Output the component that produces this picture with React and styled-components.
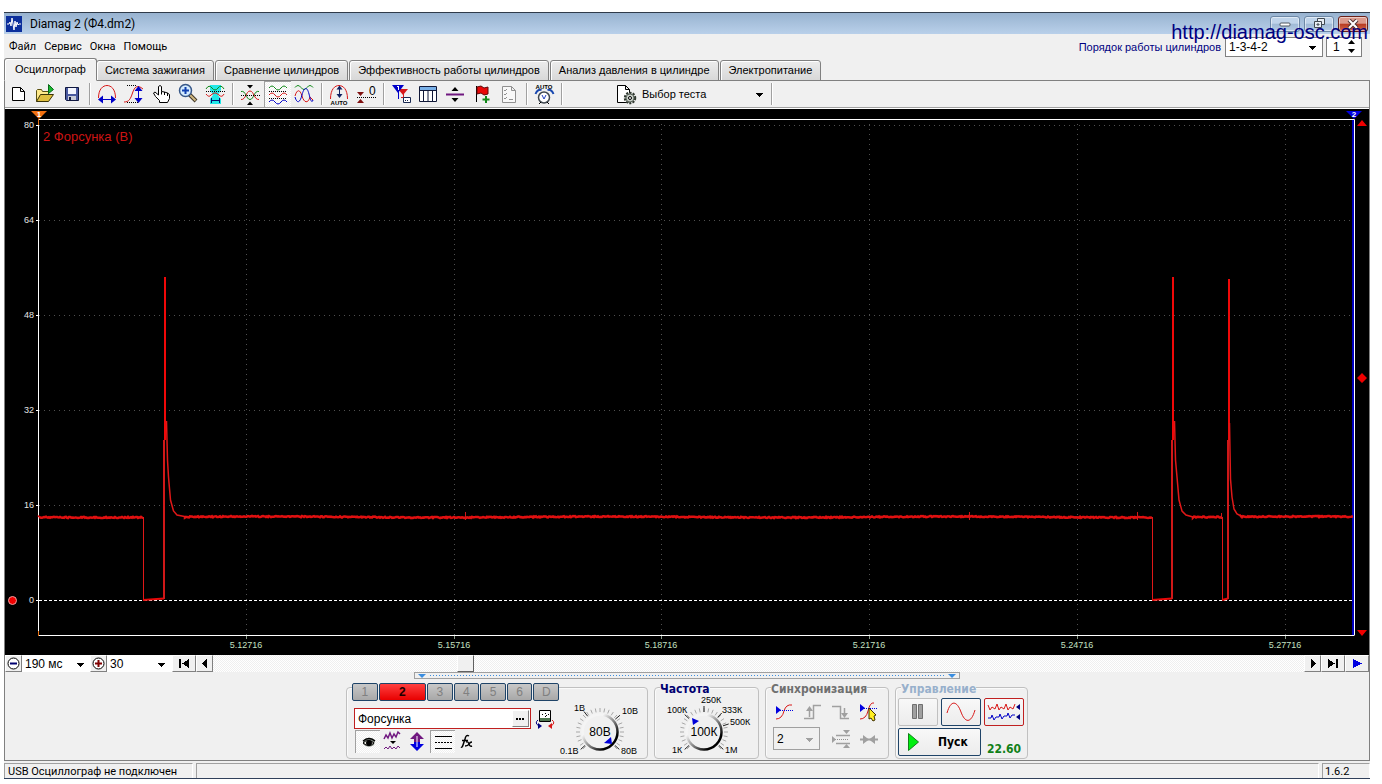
import React from "react";
import styled, { createGlobalStyle, css } from "styled-components";

const FACE = "#f0f0f0";
const LINE = "#808080";
const sans = '"Liberation Sans", Arial, sans-serif';
const system = 'Roboto, "Noto Sans", sans-serif';
const heading = '"DejaVu Sans Condensed", "Noto Sans", sans-serif';

const GlobalStyle = createGlobalStyle`
  * { box-sizing: border-box; }
  body { margin: 0; background: #fff; font-family: ${sans}; font-size: 11px; line-height: 14px; color: #000; }
  button, select, input { font: inherit; color: inherit; margin: 0; padding: 0; border: 0; border-radius: 0; outline: 0; background: none; }
  select { appearance: none; cursor: pointer; }
  svg { display: block; }
`;

/* ---------- window frame ---------- */

const Page = styled.div`
  padding: 12px 12px 0 4px;
`;

const Window = styled.div`
  position: relative;
  background: ${FACE};
  border-top: 1px solid #2f3b4a;
`;

const TitleBar = styled.header`
  display: flex;
  align-items: center;
  height: 21px;
  padding: 0 2px;
  background: linear-gradient(#98b3d0, #b9d0ea);
`;

const Title = styled.h1`
  flex: 1;
  margin: 0 0 0 8px;
  font: 12px/18px ${system};
`;

const Captions = styled.div`
  display: flex;
  gap: 4px;
`;

const CaptionButton = styled.button`
  display: flex;
  align-items: center;
  justify-content: center;
  width: 30px;
  height: 16px;
  border: 1px solid #6d88a6;
  border-radius: 3px;
  box-shadow: inset 0 0 0 1px #ffffff80;
  background: ${(p) => (p.$danger ? "linear-gradient(#dc9a8c 45%, #b83a20 50%, #d06a50)" : "linear-gradient(#c0d4ea 45%, #9fb9d5 50%, #b4cbe4)")};
  ${(p) => p.$danger && css`border-color: #6a2018;`}
`;

const Watermark = styled.a`
  position: absolute;
  top: 7px;
  right: 2px;
  font-size: 20px;
  line-height: 24px;
  color: #000080;
  text-decoration: none;
`;

const MenuBar = styled.nav`
  display: flex;
  align-items: center;
  height: 24px;
  padding: 1px 8px 0 5px;
`;

const MenuItem = styled.button`
  margin-right: 8px;
  font-family: ${system};
  font-size: 11px;
`;

const OrderLabel = styled.label`
  margin-left: auto;
  margin-right: 4px;
  color: #000080;
`;

/* ---------- drop-downs ---------- */

const SelectBox = styled.div`
  position: relative;
  width: ${(p) => p.$width}px;
  height: ${(p) => p.$height}px;
  border: ${(p) => (p.$border ? `1px solid ${p.$border}` : "0")};
  background: ${(p) => p.$fill || "#fff"};
  select { width: 100%; height: 100%; padding-left: 3px; font-size: ${(p) => p.$size || 11}px; line-height: 14px; }
  select:disabled { opacity: 1; color: #000; }
  svg { position: absolute; right: ${(p) => p.$arrow || 6}px; top: 50%; margin-top: -1px; pointer-events: none; }
`;

function DropDown({ id, label, value, color = "#000", ...box }) {
  return (
    <SelectBox {...box}>
      <select id={id} aria-label={label} disabled={box.$disabled} defaultValue={value}>
        <option>{value}</option>
      </select>
      <svg width="7" height="4" shapeRendering="crispEdges"><path d="M0 0h7L3.5 4z" fill={color} /></svg>
    </SelectBox>
  );
}

const Spinner = styled.div`
  display: flex;
  align-items: center;
  width: 36px;
  height: 20px;
  margin-left: 3px;
  border: 1px solid ${LINE};
  background: #fff;
  input { width: 18px; padding-left: 6px; font-size: 12px; }
`;

const SpinArrows = styled.div`
  display: flex;
  flex-direction: column;
  gap: 4px;
  button { width: 12px; height: 5px; display: flex; justify-content: center; align-items: center; }
`;

/* ---------- tabs ---------- */

const Tabs = styled.div`
  display: flex;
  align-items: flex-end;
  gap: 1px;
  height: 22px;
`;

const Tab = styled.button`
  height: ${(p) => (p.$active ? 23 : 21)}px;
  margin-bottom: -1px;
  padding: 0 8px 2px;
  border: 1px solid ${LINE};
  border-radius: 3px 3px 0 0;
  box-shadow: inset 1px 1px 0 #fff;
  background: linear-gradient(#ececec, #d8d8d8);
  white-space: nowrap;
  ${(p) => p.$active && css`
    position: relative;
    padding: 0 10px 2px;
    margin-right: -2px;
    border-bottom-color: ${FACE};
    background: ${FACE};
  `}
`;

const Workspace = styled.main`
  border: 1px solid ${LINE};
`;

/* ---------- toolbar ---------- */

const Toolbar = styled.div`
  display: flex;
  align-items: flex-start;
  height: 28px;
  border-bottom: 1px solid #fff;
  box-shadow: inset 0 -1px 0 #a0a0a0;
`;

const pressed = css`
  box-shadow: inset 1px 1px 0 #a0a0a0;
  background: repeating-conic-gradient(#fff 0 25%, ${FACE} 0 50%) 0 0 / 2px 2px;
`;

const ToolButton = styled.button`
  width: 27px;
  height: 26px;
  ${(p) => p.$pressed && pressed}
`;

const Separator = styled.span`
  width: 8px;
  height: 22px;
  margin-top: 2px;
  background: linear-gradient(90deg, transparent 3px, #a0a0a0 3px 4px, #fff 4px 5px, transparent 5px);
`;

const TestPicker = styled.div`
  display: flex;
  align-items: center;
  width: 156px;
  margin-left: 46px;
`;

/* ---------- chart and transport ---------- */

const Scope = styled.svg`
  width: 100%;
  height: auto;
  background: #000;
`;

const Transport = styled.div`
  display: flex;
  height: 17px;
`;

const RaisedButton = styled.button`
  display: flex;
  align-items: center;
  justify-content: center;
  width: ${(p) => p.$width}px;
  height: 17px;
  border: 1px solid;
  border-color: #fff #808080 #808080 #fff;
  background: ${FACE};
`;

const Track = styled.input`
  flex: 1;
  min-width: 0;
  height: 17px;
  appearance: none;
  background: repeating-conic-gradient(#fff 0 25%, #efefef 0 50%) 0 0 / 2px 2px;
  &::-webkit-slider-thumb {
    appearance: none;
    width: 17px;
    height: 17px;
    border: 1px solid;
    border-color: #fff #606060 #606060 #fff;
    background: ${FACE};
  }
`;

/* ---------- bottom panel ---------- */

const Splitter = styled.div`
  display: flex;
  align-items: center;
  justify-content: space-between;
  width: 40%;
  height: 7px;
  margin: 0 auto 8px;
  padding: 0 3px;
  border: 1px solid #a0a0a0;
  &::before, &::after { content: ""; border: 4px solid transparent; border-top-color: #3b8ee0; border-bottom: 0; }
`;

const SplitterDots = styled.span`
  flex: 1;
  height: 1px;
  margin: 0 4px;
  background: repeating-linear-gradient(90deg, #3b8ee0 0 1px, transparent 1px 3px);
`;

const Panels = styled.div`
  display: flex;
  justify-content: center;
  gap: 6px;
  padding-bottom: 1px;
`;

const Group = styled.section`
  display: flex;
  flex-direction: ${(p) => (p.$row ? "row" : "column")};
  width: ${(p) => p.$width}px;
  height: 72px;
  border: 1px solid #c0c0c0;
  border-radius: 4px;
  box-shadow: inset 1px 1px 0 #fafafa;
`;

const GroupTitle = styled.h2`
  align-self: flex-start;
  margin: -6px 0 0 5px;
  background: ${FACE};
  font: bold 12px/14px ${heading};
  color: ${(p) => p.$color};
`;

const ChannelSide = styled.div`
  width: 212px;
  padding-left: 5px;
`;

const Channels = styled.div`
  display: flex;
  gap: 1px;
  margin-top: -5px;
  background: ${FACE};
`;

const ChannelButton = styled.button`
  width: ${(p) => (p.$active ? 48 : 26)}px;
  height: 18px;
  border: 1px solid #1f4468;
  border-radius: 2px;
  font-size: 12px;
  color: #808080;
  background: linear-gradient(#c8c8c8, #a8a8a8);
  ${(p) => p.$active && css`
    font-weight: bold;
    color: #200000;
    background: linear-gradient(#ff4040, #e80000);
  `}
`;

const NameRow = styled.div`
  display: flex;
  align-items: center;
  gap: 4px;
  margin: 7px 0 0 2px;
`;

const NameField = styled.div`
  display: flex;
  width: 177px;
  height: 21px;
  padding: 1px;
  border: 1px solid #c02020;
  background: #fff;
  input { flex: 1; min-width: 0; padding-left: 2px; font-size: 12px; }
`;

const ModeRow = styled.div`
  display: flex;
  margin: 1px 0 0 3px;
`;

const ModeButton = styled.button`
  width: 25px;
  height: 23px;
  ${(p) => p.$pressed && pressed}
`;

const SwapButton = styled.button`
  width: 20px;
  height: 20px;
`;

const SyncGrid = styled.div`
  display: grid;
  grid-template-columns: repeat(4, 28px);
  grid-template-rows: 27px 27px;
  align-items: center;
  padding: 2px 5px;
  & > :nth-child(5) { grid-column: span 2; margin-left: 2px; }
`;

const SyncButton = styled.button`
  width: 28px;
  height: 24px;
`;

const RunGrid = styled.div`
  display: grid;
  grid-template-columns: repeat(3, 40px);
  gap: 2px 3px;
  padding: 2px;
`;

const RunButton = styled.button`
  display: flex;
  align-items: center;
  justify-content: center;
  height: 28px;
  border: 1px solid ${(p) => p.$edge || "#1f4468"};
  border-radius: 2px;
  background: linear-gradient(#f8f8f8, #ececec);
  ${(p) => p.$wide && css`
    grid-column: span 2;
    justify-content: flex-start;
    gap: 19px;
    padding-left: 9px;
    font: bold 12px/14px ${heading};
  `}
`;

const Elapsed = styled.output`
  align-self: end;
  text-align: center;
  font: bold 12px/14px ${heading};
  color: #108018;
`;

/* ---------- status bar ---------- */

const StatusBar = styled.footer`
  display: flex;
  gap: 3px;
  margin-top: 2px;
  border-bottom: 1px solid #30405a;
  box-shadow: 0 1px 0 #bcd0e4;
`;

const StatusPane = styled.div`
  ${(p) => (p.$width ? `width: ${p.$width}px;` : "flex: 1;")}
  height: 15px;
  padding-left: ${(p) => p.$pad || 3}px;
  border-left: 1px solid #a0a0a0;
  border-top: 1px solid #a0a0a0;
  border-right: 1px solid #fff;
  font: ${(p) => p.$size || 11}px/15px ${system};
  white-space: nowrap;
`;

/* ---------- icons ---------- */

const RED = "#d81818";
const GREEN = "#108818";
const BLUE = "#0000c8";

// Sine-like line with `n` half periods of width `w`, starting at x, y.
const wave = (x, y, w, n, a, up = 1) => {
  let d = `M${x} ${y}`;
  for (let i = 0; i < n; i++) d += `q${w / 2} ${(i % 2 ? a : -a) * up} ${w} 0`;
  return d;
};

const Ico = ({ w = 27, h = 26, children }) => (
  <svg width={w} height={h} viewBox={`0 0 ${w} ${h}`} fill="none" stroke="#000" aria-hidden="true">
    {children}
  </svg>
);

const Dots = ({ d, c = "#000" }) => <path d={d} stroke={c} strokeDasharray="1 1" shapeRendering="crispEdges" />;
const Solid = ({ d, c = "#000" }) => <path d={d} fill={c} stroke="none" />;

const icons = {
  new: <path d="M7.500 6.500h8l4 4v9h-12zM15.500 6.500v4h4" fill="#fff" />,
  open: (
    <>
      <path d="M4.500 20.500v-11l1-1h4l1 2h6v4" fill="#ffe98a" stroke="#5a5010" />
      <path d="M4.500 20.500l4-7h13l-5 7z" fill="#e0c040" stroke="#3a3408" />
      <path d="M16.500 3.500l5 5-5 4z" fill="#18b830" stroke="#0a6818" />
    </>
  ),
  save: (
    <>
      <path d="M6.500 6.500h13v13h-12l-1-1z" fill="#4a5aa0" stroke="#101840" />
      <Solid d="M9 7h8v6H9z" c="#f4f6ff" />
      <Solid d="M9 15h8v4H9z" c="#c8ccd8" />
      <Solid d="M10 16h2v3h-2z" c="#101840" />
    </>
  ),
  span: (
    <>
      <path d="M4.500 17C4.500 8 9 4.500 13 4.500S21.500 8 21.500 17" stroke={RED} />
      <path d="M6 18.500h14" stroke={BLUE} />
      <Solid d="M4 18.500l5-4v8zM22 18.500l-5-4v8z" c={BLUE} />
    </>
  ),
  rise: (
    <>
      <Dots d="M6 4.500h9M6 21.500h11" />
      <path d="M3 21C8 21 9.500 18 11.500 12S16 3 22 8" stroke={RED} />
      <path d="M17.500 7v12" stroke={BLUE} />
      <Solid d="M17.500 5l4 5h-8zM17.500 22l4-5h-8z" c={BLUE} />
    </>
  ),
  hand: (
    <path d="M11.500 21.500v-2l-4-4-2-3.500 1.500-1 3.500 3V5.500q1.500-2 3 0v5l3 .5 3 1 2 1.500v4l-2 4zM13.500 10.500v3M16.500 11v3M19.500 12v3" fill="#fff" />
  ),
  zoom: (
    <>
      <path d="M14.500 13.500l6.500 6.500" stroke="#403828" strokeWidth="4" />
      <path d="M15 14l5.500 5.500" stroke="#d0b880" strokeWidth="2" />
      <circle cx="10.500" cy="9.500" r="6" fill="#d4ecff" stroke="#385888" strokeWidth="1.500" />
      <path d="M10.500 6v7M7 9.500h7" stroke="#1040b0" strokeWidth="2" />
    </>
  ),
  window: (
    <>
      <Solid d="M8 4h11v5l-3 5 3 4v5H8v-5l3-4-3-5z" c="#20e8e8" />
      <path d="M4 8q3-5 6-1t6 0 6 1" stroke={GREEN} />
      <Dots d="M4 10.500h19" />
      <path d="M4 13q3 4 5 1l3-2h2l3 2q3 3 5-1" stroke={RED} />
      <path d="M9.500 17v5M17.500 17v5M10 19.500h7" stroke="#001070" />
    </>
  ),
  cross: (
    <>
      <path d="M4 10.500C9 9 9 18.500 13 18.500S17 9 22 10.500" stroke={GREEN} />
      <path d="M4 18.500C9 19 9 10 13 10S17 19 22 18.500" stroke={RED} />
      <Dots d="M4 14.500h19" />
      <Solid d="M10 4h6l-3 3.500zM10 24h6l-3-3.500z" />
    </>
  ),
  stack: (
    <>
      <path d={wave(5, 7, 6, 3, 4)} stroke={GREEN} />
      <Dots d="M5 10.500h18M5 17.500h18" />
      <path d={wave(5, 14, 6, 3, 4)} stroke={RED} />
      <path d={wave(5, 21, 6, 3, 4)} stroke={BLUE} />
    </>
  ),
  overlay: (
    <>
      <path d={wave(4, 6.5, 6, 3, 4)} stroke={GREEN} />
      <path d="M4 15C6 8 9 8 11 15S17 23 19 16L22 19" stroke={RED} />
      <path d="M4 16C6 23 9 22 11 14S16 5 18 13 21 22 22 19" stroke={BLUE} />
    </>
  ),
  autoSpan: (
    <>
      <path d="M4.500 18C4.500 8 9 4.500 13 4.500S21.500 8 21.500 18" stroke={RED} />
      <path d="M13.500 6v10" stroke="#102060" />
      <Solid d="M13.500 4.500l3 4h-6zM13.500 17l3-4h-6z" c="#102060" />
      <text x="13" y="24" fontSize="6" fontWeight="bold" textAnchor="middle" fill="#000" stroke="none">AUTO</text>
    </>
  ),
  zero: (
    <>
      <Solid d="M4 11h7l-3.500 4zM4 22h7l-3.500-4z" c="#801010" />
      <Dots d="M4 16.500h19" />
      <text x="16" y="14" fontSize="12" fill="#000" stroke="none">0</text>
    </>
  ),
  filter: (
    <>
      <Solid d="M10 8h10l-5 6z" c={RED} />
      <path d="M15.500 12v6M13 16.500h5" stroke={RED} />
      <Solid d="M4 4h12l-6 8z" c={BLUE} />
      <path d="M9 5.500h2M10.500 5v4" stroke="#fff" />
      <path d="M10.500 10v8" stroke={BLUE} />
      <path d="M15.500 16.500h7v5h-7z" fill="#fff" stroke="#182850" />
      <path d="M17 19.500h4" stroke="#182850" strokeDasharray="1 1" />
    </>
  ),
  table: (
    <>
      <path d="M4.500 5.500h17v15h-17z" fill="#fff" stroke="#101838" />
      <Solid d="M5 6h16v3H5z" c="#78b0e8" />
      <path d="M5 9.500h16M8.500 9v11M13 9v11M17.500 9v11" stroke="#101838" />
    </>
  ),
  divide: (
    <>
      <Solid d="M13 6l3.500 4h-7zM13 21l3.500-4h-7z" />
      <path d="M4 13.500h18" stroke="#701880" strokeWidth="2" />
    </>
  ),
  flag: (
    <>
      <path d="M7.500 5v16" />
      <path d="M8 6l4-1 3 2 4-1v7l-4 1-3-2-4 1z" fill="#e80808" stroke="#600808" />
      <path d="M17 15v7M13.500 18.500h7" stroke={GREEN} strokeWidth="2" />
    </>
  ),
  list: (
    <>
      <path d="M6.500 5.500h9l4 4v12h-13zM15.500 5.500v4h4" fill="#f8f8f8" stroke="#909090" />
      <path d="M8 9l1 1 2-2M8 13l1 1 2-2M8 17l1 1 2-2M13 18.500h4" stroke="#909090" />
    </>
  ),
  timer: (
    <>
      <text x="13" y="8" fontSize="6" fontWeight="bold" textAnchor="middle" fill="#000" stroke="none">AUTO</text>
      <path d="M4.500 13q2-5 6-4M22.500 13q-2-5-6-4" stroke="#1848b0" strokeWidth="2" />
      <circle cx="13" cy="16.500" r="5.500" fill="#fff" stroke="#404850" strokeWidth="1.500" />
      <path d="M11 14l2 4 2-4" stroke="#2040c0" />
      <path d="M10 21l-2 2M16 21l2 2" />
    </>
  ),
};

const toolGroups = [
  [["new", "Новый"], ["open", "Открыть"], ["save", "Сохранить"]],
  [["span", "Период"], ["rise", "Фронт"], ["hand", "Рука"], ["zoom", "Лупа"], ["window", "Окно"]],
  [["cross", "Свести"], ["stack", "Разнести", true], ["overlay", "Наложить"]],
  [["autoSpan", "Автомасштаб"], ["zero", "Ноль"]],
  [["filter", "Маркеры"], ["table", "Таблица"], ["divide", "Разделить"], ["flag", "Флаг"], ["list", "Список"]],
  [["timer", "Автотаймер"]],
];

const tabs = ["Осциллограф", "Система зажигания", "Сравнение цилиндров", "Эффективность работы цилиндров", "Анализ давления в цилиндре", "Электропитание"];

/* ---------- oscilloscope ---------- */

const BASE = 408;

// Slightly noisy level between two x positions.
const level = (from, to) => {
  let d = `M${from} ${BASE}`;
  for (let x = from; x <= to; x += 1) {
    const n = Math.abs(Math.sin(x * 12.9898) * 43758.5) % 1;
    d += `L${x} ${BASE - 0.6 + n * 1.2 + Math.sin(x / 55) * 0.5}`;
  }
  return d;
};

const levels = [level(34, 138), level(180, 1147), level(1188, 1217), level(1236, 1348)];

const Pulse = ({ drop, rise, peak, tail }) => (
  <g fill="none">
    <path d={`M${drop + 0.5} 408V491`} stroke="#e01818" />
    <path d={`M${drop} 491L${rise} 489.500`} stroke="#e80808" strokeWidth="2" />
    <path d={`M${rise} 331V490`} stroke="#d01818" strokeWidth="2" />
    <path d={`M${rise + 1} ${peak}V331`} stroke="#f00808" strokeWidth="2" />
    <path d={tail} stroke="#e01818" strokeWidth="1.500" />
  </g>
);

function Oscillogram() {
  const xs = [241, 449, 656, 864, 1072, 1280];
  const volts = [80, 64, 48, 32, 16, 0];
  return (
    <Scope viewBox="0 0 1364 546" fontFamily={sans} role="img" aria-label="Осциллограмма форсунки">
      <g stroke="#505050" strokeDasharray="1 4">
        {volts.slice(0, 5).map((v, i) => <path key={v} d={`M34 ${16.5 + i * 95}H1347`} />)}
        {xs.map((x) => <path key={x} d={`M${x + 0.5} 15V526`} />)}
      </g>
      <path d="M34 491.500H1349" stroke="#fff" strokeDasharray="3 2" />
      <g stroke="#fff">
        <path d="M33.500 526.500V10.500H1349.500V526.500" fill="none" />
        <path d="M33 526.500H1349" />
        {volts.map((v, i) => <path key={v} d={`M31 ${16.5 + i * 95}h3`} />)}
      </g>
      <path d="M1348 11V526" stroke="#0000c0" strokeWidth="2" />
      <path d="M33.500 10V16M33.500 522V527" stroke="#e87010" />
      <g stroke="#8a9a8a">{xs.map((x) => <path key={x} d={`M${x + 0.5} 527v3`} />)}</g>
      <g fontSize="9" fill="#e4e4e4" textAnchor="end">
        {volts.map((v, i) => <text key={v} x="29" y={19 + i * 95}>{v}</text>)}
      </g>
      <g fontSize="9" fill="#c4e0c0" textAnchor="middle">
        {xs.map((x, i) => <text key={x} x={x} y="539">{(5.12716 + i * 0.03).toFixed(5)}</text>)}
      </g>
      <text x="38" y="32" fontSize="13" fill="#cc1414">2 Форсунка (В)</text>
      <g fill="none" stroke="#e01010" strokeWidth="2.500">
        {levels.map((d) => <path key={d} d={d} />)}
      </g>
      <path d="M460.500 403v8M964.500 403v8M1132.500 403v8M1216.500 404v6" stroke="#d01818" />
      <Pulse drop={138} rise={159} peak={168} tail="M161.500 312L162.500 351 163.500 368 165.500 391 168.500 402 172 406 177 407 182 408" />
      <Pulse drop={1147} rise={1167} peak={168} tail="M1169.500 312L1170.500 351 1172 368 1174 391 1177 402 1181 406 1188 408" />
      <Pulse drop={1217} rise={1223} peak={170} tail="M1224.500 314L1225.500 370 1227 388 1229 400 1232 405 1238 408" />
      <Solid d="M26 2h16l-8 8z" c="#f07010" />
      <Solid d="M1341 2h16l-8 8z" c="#0000e0" />
      <g fontSize="8" fontWeight="bold" fill="#fff" textAnchor="middle">
        <text x="34" y="8">1</text>
        <text x="1349" y="8">2</text>
      </g>
      <Solid d="M1352 17h10l-5-6zM1352 521h10l-5 6zM1357 264l5 5-5 5-5-5z" c="#f00000" />
      <circle cx="7.500" cy="491.500" r="4" fill="#f00000" stroke="#f0a0a0" />
    </Scope>
  );
}

/* ---------- rotary knobs ---------- */

function Knob({ cx, cy, value, w, labels, major, pointer, name }) {
  const ticks = Array.from({ length: 25 }, (_, i) => 135 + i * 11.25);
  const line = (deg, r1, r2, key) => {
    const c = Math.cos((deg * Math.PI) / 180);
    const s = Math.sin((deg * Math.PI) / 180);
    return <path key={key} d={`M${cx + c * r1} ${cy + s * r1}L${cx + c * r2} ${cy + s * r2}`} />;
  };
  const id = `rim-${name}`;
  return (
    <svg width={w} height="69" viewBox={`0 0 ${w} 69`} role="slider" aria-label={name} aria-valuetext={value} aria-valuenow={0} fontFamily={sans}>
      <defs>
        <linearGradient id={id} x1="0" y1="0" x2="1" y2="1">
          <stop offset="0.300" stopColor="#f4f4f4" />
          <stop offset="0.600" stopColor="#686868" />
          <stop offset="0.800" stopColor="#000" />
        </linearGradient>
      </defs>
      <g stroke="#a8a8a8">{ticks.map((t) => line(t, 20, 24, t))}</g>
      <g stroke="#202020">{major.map((t) => line(t, 20, 26, t))}</g>
      <circle cx={cx} cy={cy} r="17.500" fill="#f0f0f0" stroke={`url(#${id})`} strokeWidth="2.500" />
      <path d={pointer} fill="#0000d8" />
      <text x={cx} y={cy + 4} fontSize="12" textAnchor="middle">{value}</text>
      <g fontSize="9">
        {labels.map(([t, x, y]) => <text key={t} x={x} y={y}>{t}</text>)}
      </g>
    </svg>
  );
}

const KnobShift = styled.div`
  margin-top: -6px;
`;

const Tri = ({ d, w = 12, c = "#000" }) => (
  <svg width={w} height="9" shapeRendering="crispEdges" aria-hidden="true"><path d={d} fill={c} /></svg>
);

export default function App() {
  return (
    <Page>
      <GlobalStyle />
      <Window>
        <TitleBar>
          <svg width="16" height="16" aria-hidden="true">
            <rect width="16" height="16" fill="#0c2f9c" />
            <path d="M1 8h2l1-2 1 4 1-8 2 12 1-9 1 6 1-5 1 3 1-1h2" fill="none" stroke="#fff" />
          </svg>
          <Title>Diamag 2 (Ф4.dm2)</Title>
          <Captions>
            <CaptionButton aria-label="Свернуть">
              <svg width="12" height="6"><rect x="1" y="2" width="10" height="3" rx="1" fill="#fff" stroke="#505860" /></svg>
            </CaptionButton>
            <CaptionButton aria-label="Восстановить">
              <svg width="13" height="11" fill="#e8eef4" stroke="#404850"><path d="M4.500 .5h7v6h-7z" /><path d="M1.500 3.500h7v6h-7zM4 6h2v1h-2z" /></svg>
            </CaptionButton>
            <CaptionButton $danger aria-label="Закрыть">
              <svg width="12" height="10"><path d="M2 1l8 8M10 1l-8 8" stroke="#503030" strokeWidth="4" /><path d="M2 1l8 8M10 1l-8 8" stroke="#fff" strokeWidth="2" /></svg>
            </CaptionButton>
          </Captions>
        </TitleBar>

        <MenuBar>
          {["Файл", "Сервис", "Окна", "Помощь"].map((m) => <MenuItem key={m}>{m}</MenuItem>)}
          <OrderLabel htmlFor="order">Порядок работы цилиндров</OrderLabel>
          <DropDown id="order" value="1-3-4-2" $width={98} $height={20} $border={LINE} $size={12} />
          <Spinner>
            <input aria-label="Цилиндр" defaultValue="1" />
            <SpinArrows>
              <button aria-label="Больше"><svg width="7" height="4"><path d="M0 4h7L3.500 0z" /></svg></button>
              <button aria-label="Меньше"><svg width="7" height="4"><path d="M0 0h7L3.500 4z" /></svg></button>
            </SpinArrows>
          </Spinner>
        </MenuBar>

        <Tabs role="tablist">
          {tabs.map((t, i) => <Tab key={t} role="tab" aria-selected={i === 0} $active={i === 0}>{t}</Tab>)}
        </Tabs>

        <Workspace>
          <Toolbar>
            {toolGroups.map((group) => (
              <React.Fragment key={group[0][0]}>
                {group.map(([icon, label, on]) => (
                  <ToolButton key={icon} aria-label={label} $pressed={on}><Ico>{icons[icon]}</Ico></ToolButton>
                ))}
                <Separator />
              </React.Fragment>
            ))}
            <TestPicker>
              <Ico>
                <path d="M5.500 4.500h8l4 4v13h-12zM13.500 4.500v4h4" fill="#fff" />
                <circle cx="18" cy="17" r="5" fill="#c8d0c8" stroke="#303830" strokeWidth="2.500" strokeDasharray="2 1.200" />
                <circle cx="18" cy="17" r="4" fill="#c8d0c8" stroke="#606860" />
                <circle cx="18" cy="17" r="1.500" fill="#fff" />
              </Ico>
              <DropDown label="Выбор теста" value="Выбор теста" $width={128} $height={20} $fill={FACE} $arrow={4} />
            </TestPicker>
            <Separator />
          </Toolbar>

          <Oscillogram />

          <Transport>
            <RaisedButton $width={17} aria-label="Сжать">
              <svg width="13" height="13"><circle cx="6.500" cy="6.500" r="5.500" fill="#fff" stroke="#000" /><path d="M3 6.500h7" stroke="#000070" strokeWidth="2" /></svg>
            </RaisedButton>
            <DropDown label="Развёртка" value="190 мс" $width={68} $height={17} $size={12} $arrow={6} />
            <RaisedButton $width={17} aria-label="Растянуть">
              <svg width="13" height="13"><circle cx="6.500" cy="6.500" r="5.500" fill="#fff" stroke="#000" /><path d="M3 6.500h7M6.500 3v7" stroke="#800000" strokeWidth="2" /></svg>
            </RaisedButton>
            <DropDown label="Кадр" value="30" $width={65} $height={17} $size={12} $arrow={7} />
            <RaisedButton $width={24} aria-label="В начало"><Tri d="M1 0h2v9h-2zM11 0v9L4 4.500z" /></RaisedButton>
            <RaisedButton $width={17} aria-label="Назад"><Tri w={6} d="M5 0v9L0 4.500z" /></RaisedButton>
            <Track type="range" aria-label="Позиция" min="0" max="1000" defaultValue="227" />
            <RaisedButton $width={17} aria-label="Вперёд"><Tri w={6} d="M1 0v9l5-4.500z" /></RaisedButton>
            <RaisedButton $width={24} aria-label="В конец"><Tri d="M1 0v9l7-4.500zM9 0h2v9h-2z" /></RaisedButton>
            <RaisedButton $width={24} aria-label="Воспроизвести"><Tri w={9} d="M0 0v9l9-4.500z" c="#0000e0" /></RaisedButton>
          </Transport>

          <Splitter><SplitterDots /></Splitter>

          <Panels>
            <Group $row $width={302}>
              <ChannelSide>
                <Channels>
                  {["1", "2", "3", "4", "5", "6", "D"].map((c) => <ChannelButton key={c} $active={c === "2"}>{c}</ChannelButton>)}
                </Channels>
                <NameRow>
                  <NameField>
                    <input aria-label="Название канала" defaultValue="Форсунка" />
                    <RaisedButton $width={17} aria-label="Выбрать датчик">
                      <svg width="9" height="2"><path d="M0 0h2v2H0zM3 0h2v2H3zM6 0h2v2H6z" /></svg>
                    </RaisedButton>
                  </NameField>
                  <SwapButton aria-label="Сменить датчик">
                    <Ico w={20} h={20}>
                      <path d="M4.500 1.500h11v11h-11z" fill="#fff" />
                      <Solid d="M5 9h10v3H5z" c="#507850" />
                      <path d="M7 5.500h1M10 4.500h1M13 5.500h1M10 8l2-2" />
                      <path d="M3 11q-4 3 1 6" stroke="#000080" />
                      <path d="M17 11q4 3-1 6" stroke={RED} />
                      <Solid d="M3 14v6l4-3z" c="#000080" />
                      <Solid d="M17 14v6l-4-3z" c={RED} />
                    </Ico>
                  </SwapButton>
                </NameRow>
                <ModeRow>
                  <ModeButton $pressed aria-label="Показать">
                    <Ico w={25} h={23}>
                      <path d="M8 11q5-6 12-1l-1 5q-6 4-11-1z" fill="#808880" stroke="none" />
                      <path d="M8 13q5-5 11 0-5 5-11 0z" fill="#e8e8e0" />
                      <circle cx="14" cy="13" r="2.500" fill="#000" />
                      <path d="M8 11q6-5 12 0" strokeWidth="1.500" />
                    </Ico>
                  </ModeButton>
                  <ModeButton aria-label="Сглаживание">
                    <Ico w={25} h={23}>
                      <path d="M4 9l2-4 2 3 2-5 2 5 2-4 2 3 2-5 2 2" stroke="#701880" strokeWidth="1.500" />
                      <Solid d="M10 11h6l-3 3z" />
                      <path d="M4 19l2-2 2 2 2-3 2 3 2-2 2 2 2-3 2 2" stroke="#701880" />
                    </Ico>
                  </ModeButton>
                  <ModeButton aria-label="Инвертировать">
                    <Ico w={25} h={23}>
                      <Solid d="M12 2l7 7h-4v3h-6V9H5z" c="#701880" />
                      <Solid d="M12 21l7-7h-4v-2h-6v2H5z" c="#0000e0" />
                      <path d="M12 6v11" stroke="#fff" />
                    </Ico>
                  </ModeButton>
                  <ModeButton $pressed aria-label="Линии">
                    <Ico w={25} h={23}>
                      <path d="M5 6.500h17M5 18.500h17" />
                      <path d="M5 12.500h17" strokeDasharray="2 1" />
                    </Ico>
                  </ModeButton>
                  <ModeButton aria-label="Функция">
                    <Ico w={25} h={23}>
                      <path d="M14 6q-3-2-4 3l-2 6q-1 3-2 2M7 10.500h6" strokeWidth="1.500" />
                      <path d="M11 12q2-1 3 2t3 2M17 12q-2 0-3 2t-4 2" strokeWidth="1.500" />
                    </Ico>
                  </ModeButton>
                </ModeRow>
              </ChannelSide>
              <Knob
                name="Предел" cx={41} cy={44} w={87} value="80В"
                major={[138, 232, 320, 42]}
                pointer="M52 49l1 7-8-1z"
                labels={[["1В", 15, 23], ["10В", 63, 26], ["0.1В", 1, 66], ["80В", 62, 66]]}
              />
            </Group>

            <Group $width={105}>
              <GroupTitle $color="#000070">Частота</GroupTitle>
              <KnobShift>
                <Knob
                  name="Частота" cx={49} cy={42} w={102} value="100К"
                  major={[138, 222, 270, 313, 342, 42]}
                  pointer="M37 28l7 3-6 4z"
                  labels={[["250К", 46, 13], ["100К", 12, 23], ["333К", 67, 23], ["500К", 75, 35], ["1К", 17, 63], ["1М", 70, 63]]}
                />
              </KnobShift>
            </Group>

            <Group $width={124}>
              <GroupTitle $color="#707070">Синхронизация</GroupTitle>
              <SyncGrid>
                <SyncButton aria-label="Уровень">
                  <Ico w={28} h={24}>
                    <path d="M5 19q6 0 8-8 2-7 8-6" stroke={RED} />
                    <Dots d="M5 10.500h17" c="#0000e0" />
                    <Solid d="M5 6v8l5-4z" c="#0000e0" />
                  </Ico>
                </SyncButton>
                <SyncButton aria-label="По фронту">
                  <Ico w={28} h={24}><path d="M5 18.500h9.500V5.500H22M10.500 17V9" stroke="#a0a0a0" strokeWidth="1.500" /><Solid d="M7 11h7l-3.500-5z" c="#a0a0a0" /></Ico>
                </SyncButton>
                <SyncButton aria-label="По спаду">
                  <Ico w={28} h={24}><path d="M5 6.500h8.500v12H22M17.500 8v7" stroke="#a0a0a0" strokeWidth="1.500" /><Solid d="M14 13h7l-3.500 5z" c="#a0a0a0" /></Ico>
                </SyncButton>
                <SyncButton aria-label="Автоуровень">
                  <Ico w={28} h={24}>
                    <path d="M5 19q6 0 8-8 2-9 6-8" stroke={RED} />
                    <Dots d="M5 8.500h18" c="#0000e0" />
                    <Solid d="M5 4v8l5-4z" c="#0000e0" />
                    <path d="M14 8v11l2-1 2 3 2-1-1-4 2-1z" fill="#ffee20" stroke="#403000" />
                  </Ico>
                </SyncButton>
                <DropDown label="Канал синхронизации" value="2" color="#a0a0a0" $disabled $width={47} $height={23} $border="#a0a0a0" $fill={FACE} $size={12} $arrow={6} />
                <SyncButton aria-label="Порог">
                  <Ico w={28} h={24}>
                    <path d="M9 8.500h14M9 16.500h14" stroke="#a0a0a0" strokeWidth="1.500" />
                    <Dots d="M6 12.500h16" c="#909090" />
                    <Solid d="M5 9v7l4-3.500zM16 3h7l-3.500 4zM16 21h7l-3.500-4z" c="#a0a0a0" />
                  </Ico>
                </SyncButton>
                <SyncButton aria-label="Центрировать">
                  <Ico w={28} h={24}><path d="M5 12.500h18" stroke="#a0a0a0" strokeWidth="2" /><Solid d="M8 8l6 4.500-6 4.500zM20 8l-6 4.500 6 4.500z" c="#a0a0a0" /></Ico>
                </SyncButton>
              </SyncGrid>
            </Group>

            <Group $width={133}>
              <GroupTitle $color="#98b0cc">Управление</GroupTitle>
              <RunGrid>
                <RunButton $edge="#c0c0c0" aria-label="Пауза">
                  <svg width="12" height="16" fill="#a0a0a0" stroke="#707070"><path d="M.5 .5h4v14h-4zM6.500 .5h4v14h-4z" /></svg>
                </RunButton>
                <RunButton aria-label="Синус">
                  <svg width="30" height="20" fill="none" stroke={RED}><path d="M1 11C5-3 11-1 15 10S25 22 29 8" /></svg>
                </RunButton>
                <RunButton $edge="#c02020" aria-label="Запись">
                  <svg width="34" height="22" fill="none">
                    <path d="M1 4l2 5 2-3 3 2 2-5 2 6 2-3 3 2 2-5 2 6 2-3 3 2 2-5" stroke={RED} />
                    <path d="M1 17h3l1-3 2 5 2-3h3l1-3 2 5 2-3h3l1-3 2 5 2-3h3" stroke={BLUE} />
                    <Solid d="M33 3v6l-4-3zM33 13v6l-4-3z" c="#000080" />
                  </svg>
                </RunButton>
                <RunButton $wide>
                  <svg width="11" height="18"><path d="M.5 .5l10 8.500-10 8.500z" fill="#00f010" stroke="#108018" /></svg>
                  Пуск
                </RunButton>
                <Elapsed>22.60</Elapsed>
              </RunGrid>
            </Group>
          </Panels>
        </Workspace>

        <StatusBar>
          <StatusPane $width={189}>USB Осциллограф не подключен</StatusPane>
          <StatusPane />
          <StatusPane $width={48} $pad={2}>1.6.2</StatusPane>
        </StatusBar>
        <Watermark href="http://diamag-osc.com">http://diamag-osc.com</Watermark>
      </Window>
    </Page>
  );
}
